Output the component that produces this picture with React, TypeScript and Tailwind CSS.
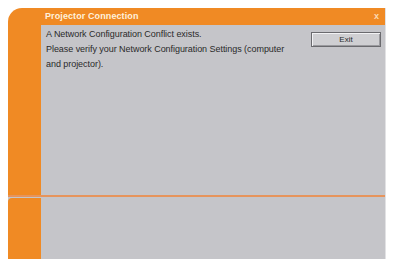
import React from 'react';

const App: React.FC = () => {
  return (
    <div className="w-[393px] h-[262px] bg-white pt-[8px] pl-[8px] font-['Liberation_Sans',sans-serif]">
      <div className="w-[378px] h-[251px] flex flex-col border-r border-[#e2e2e4]">
        {/* Top: dialog body */}
        <div className="h-[187px] bg-[#f08a24] rounded-tl-[14px] flex flex-col pl-[33px]">
          {/* Title bar */}
          <div className="h-[17px] flex items-center justify-between pl-[4px] pr-[6px]">
            <span className="text-[9px] font-bold text-[#fff1dc] tracking-[0.1px]">Projector Connection</span>
            <span className="text-[9px] font-bold text-[#fbd9b4] leading-none">x</span>
          </div>
          {/* Content */}
          <div className="flex-1 bg-[#c5c5c9] flex justify-between pl-[5px] pr-[4px] pt-[2px]">
            <div className="text-[9px] leading-[15px] text-[#2a2a2a] tracking-[-0.05px]">
              <div>A Network Configuration Conflict exists.</div>
              <div>Please verify your Network Configuration Settings (computer</div>
              <div>and projector).</div>
            </div>
            <div className="mt-[5px] w-[70px] h-[15px] shrink-0 bg-[#cfcfd2] border border-[#6a6a6e] shadow-[inset_1px_1px_0_#f2f2f4,inset_-1px_-1px_0_#9a9a9e] flex items-center justify-center text-[8px] text-[#2a2a2a]">
              Exit
            </div>
          </div>
        </div>
        {/* Separator */}
        <div className="h-[2px] bg-[#e6945c]" />
        {/* Bottom strip */}
        <div className="flex-1 flex bg-[#c5c5c9] pt-[1px]">
          <div className="w-[33px] bg-[#f08a24] rounded-tl-[4px]" />
          <div className="flex-1" />
        </div>
      </div>
    </div>
  );
};

export default App;
